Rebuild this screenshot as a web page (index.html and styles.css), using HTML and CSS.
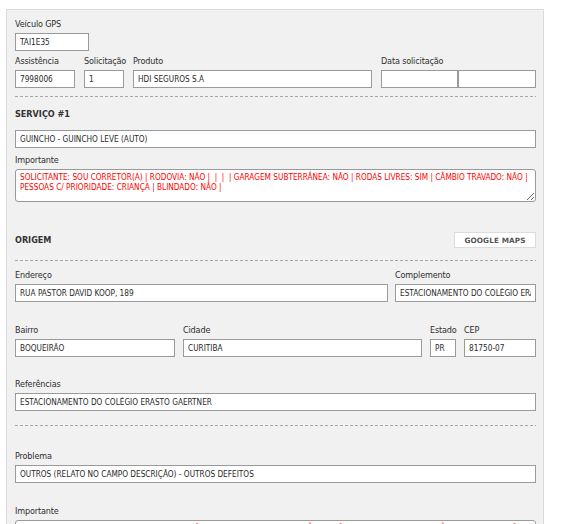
FILE: index.html
```html
<!DOCTYPE html>
<html lang="pt-BR">
<head>
<meta charset="utf-8">
<title>Serviço</title>
<link rel="stylesheet" href="styles.css">
</head>
<body>
<div class="panel">
  <div class="field f-gps">
    <label class="lbl">Veículo GPS</label>
    <input class="inp" value="TAI1E35">
  </div>

  <div class="grid g-top">
    <div class="field"><label class="lbl">Assistência</label><input class="inp" value="7998006"></div>
    <div class="field"><label class="lbl">Solicitação</label><input class="inp" value="1"></div>
    <div class="field"><label class="lbl">Produto</label><input class="inp" value="HDI SEGUROS S.A"></div>
    <div class="field"><label class="lbl">Data solicitação</label>
      <div class="pair"><input class="inp" value=""><input class="inp" value=""></div>
    </div>
  </div>

  <div class="sep sep-1"></div>

  <h3 class="heading h-servico">SERVIÇO #1</h3>
  <input class="inp inp-servico" value="GUINCHO - GUINCHO LEVE (AUTO)">

  <div class="field f-imp1">
    <label class="lbl">Importante</label>
    <textarea class="obs" wrap="off">SOLICITANTE: SOU CORRETOR(A) | RODOVIA: NÃO |  |  |  | GARAGEM SUBTERRÂNEA: NÃO | RODAS LIVRES: SIM | CÂMBIO TRAVADO: NÃO |
PESSOAS C/ PRIORIDADE: CRIANÇA | BLINDADO: NÃO |</textarea>
  </div>

  <div class="sec-head">
    <h3 class="heading">ORIGEM</h3>
    <button class="btn" type="button">GOOGLE MAPS</button>
  </div>

  <div class="sep sep-2"></div>

  <div class="grid g-end">
    <div class="field"><label class="lbl">Endereço</label><input class="inp" value="RUA PASTOR DAVID KOOP, 189"></div>
    <div class="field"><label class="lbl">Complemento</label><input class="inp" value="ESTACIONAMENTO DO COLÉGIO ERASTO GAERTNER"></div>
  </div>

  <div class="grid g-bairro">
    <div class="field"><label class="lbl">Bairro</label><input class="inp" value="BOQUEIRÃO"></div>
    <div class="field"><label class="lbl">Cidade</label><input class="inp" value="CURITIBA"></div>
    <div class="field"><label class="lbl">Estado</label><input class="inp" value="PR"></div>
    <div class="field"><label class="lbl">CEP</label><input class="inp" value="81750-07"></div>
  </div>

  <div class="field f-ref">
    <label class="lbl">Referências</label>
    <input class="inp" value="ESTACIONAMENTO DO COLÉGIO ERASTO GAERTNER">
  </div>

  <div class="sep sep-3"></div>

  <div class="field f-prob">
    <label class="lbl">Problema</label>
    <input class="inp" value="OUTROS (RELATO NO CAMPO DESCRIÇÃO) - OUTROS DEFEITOS">
  </div>

  <div class="field f-imp2">
    <label class="lbl">Importante</label>
    <textarea class="obs" wrap="off">SOLICITANTE: SOU CORRETOR(A) | RODOVIA: NÃO |  |  |  | GARAGEM SUBTERRÂNEA: NÃO | RODAS LIVRES: SIM | CÂMBIO TRAVADO: NÃO |
PESSOAS C/ PRIORIDADE: CRIANÇA | BLINDADO: NÃO |</textarea>
  </div>
</div>
</body>
</html>
```

FILE: styles.css
```css
* {
  box-sizing: border-box;
}

html, body {
  margin: 0;
  padding: 0;
  background: #ffffff;
}

body {
  font-family: "DejaVu Sans Condensed", "DejaVu Sans", sans-serif;
  font-stretch: condensed;
  color: #333333;
}

.panel {
  margin: 9px 0 0 6px;
  width: 538px;
  background: #f1f1f1;
  border: 1px solid #dcdcdc;
  padding: 9px 7px 20px 8px;
}

.field {
  display: flex;
  flex-direction: column;
}

.lbl {
  display: block;
  font-size: 9px;
  line-height: 10px;
  height: 10px;
  margin-bottom: 4px;
  color: #2f2f2f;
  letter-spacing: -0.15px;
  white-space: nowrap;
}

.inp {
  display: block;
  width: 100%;
  height: 18px;
  margin: 0;
  border: 1px solid #9a9a9a;
  border-radius: 0;
  background: #ffffff;
  padding: 0 4px;
  font-family: inherit;
  font-stretch: condensed;
  font-size: 8.2px;
  color: #2a2a2a;
  outline: none;
}

.f-gps {
  width: 74px;
}

.grid {
  display: grid;
}

.g-top {
  margin-top: 5px;
  grid-template-columns: 60px 40px 239px 155px;
  column-gap: 9px;
}

.pair {
  display: grid;
  grid-template-columns: 77px 78px;
}

.sep {
  height: 1px;
  background: repeating-linear-gradient(to right, #a8a8a8 0 3px, transparent 3px 5px);
}

.sep-1 { margin-top: 8px; }
.sep-2 { margin-top: 12px; }
.sep-3 { margin-top: 14px; }

.heading {
  margin: 0;
  font-size: 9px;
  line-height: 12px;
  height: 12px;
  font-weight: bold;
  color: #333333;
}

.h-servico {
  margin-top: 11px;
}

.inp-servico {
  margin-top: 10px;
}

.f-imp1 {
  margin-top: 7px;
}

.obs {
  display: block;
  width: 100%;
  height: 33px;
  margin: 0;
  border: 1px solid #9a9a9a;
  border-radius: 3px;
  background: #ffffff;
  padding: 2px 4px;
  font-family: inherit;
  font-stretch: condensed;
  font-size: 8.2px;
  line-height: 10px;
  color: #ff0000;
  overflow: hidden;
  white-space: pre;
  outline: none;
}

.sec-head {
  margin-top: 30px;
  height: 16px;
  display: flex;
  align-items: center;
  justify-content: space-between;
}

.btn {
  width: 82px;
  height: 16px;
  margin: 0;
  padding: 0;
  border: 1px solid #dcdcdc;
  background: #ffffff;
  font-family: "DejaVu Sans", sans-serif;
  font-stretch: normal;
  font-size: 7.3px;
  font-weight: bold;
  letter-spacing: 0.1px;
  color: #555555;
}

.g-end {
  margin-top: 9px;
  grid-template-columns: 373px 141px;
  column-gap: 7px;
}

.g-bairro {
  margin-top: 23px;
  grid-template-columns: 160px 239px 26px 72px;
  column-gap: 8px;
}

.f-ref { margin-top: 22px; }
.f-prob { margin-top: 25px; }
.f-imp2 { margin-top: 23px; }
```
